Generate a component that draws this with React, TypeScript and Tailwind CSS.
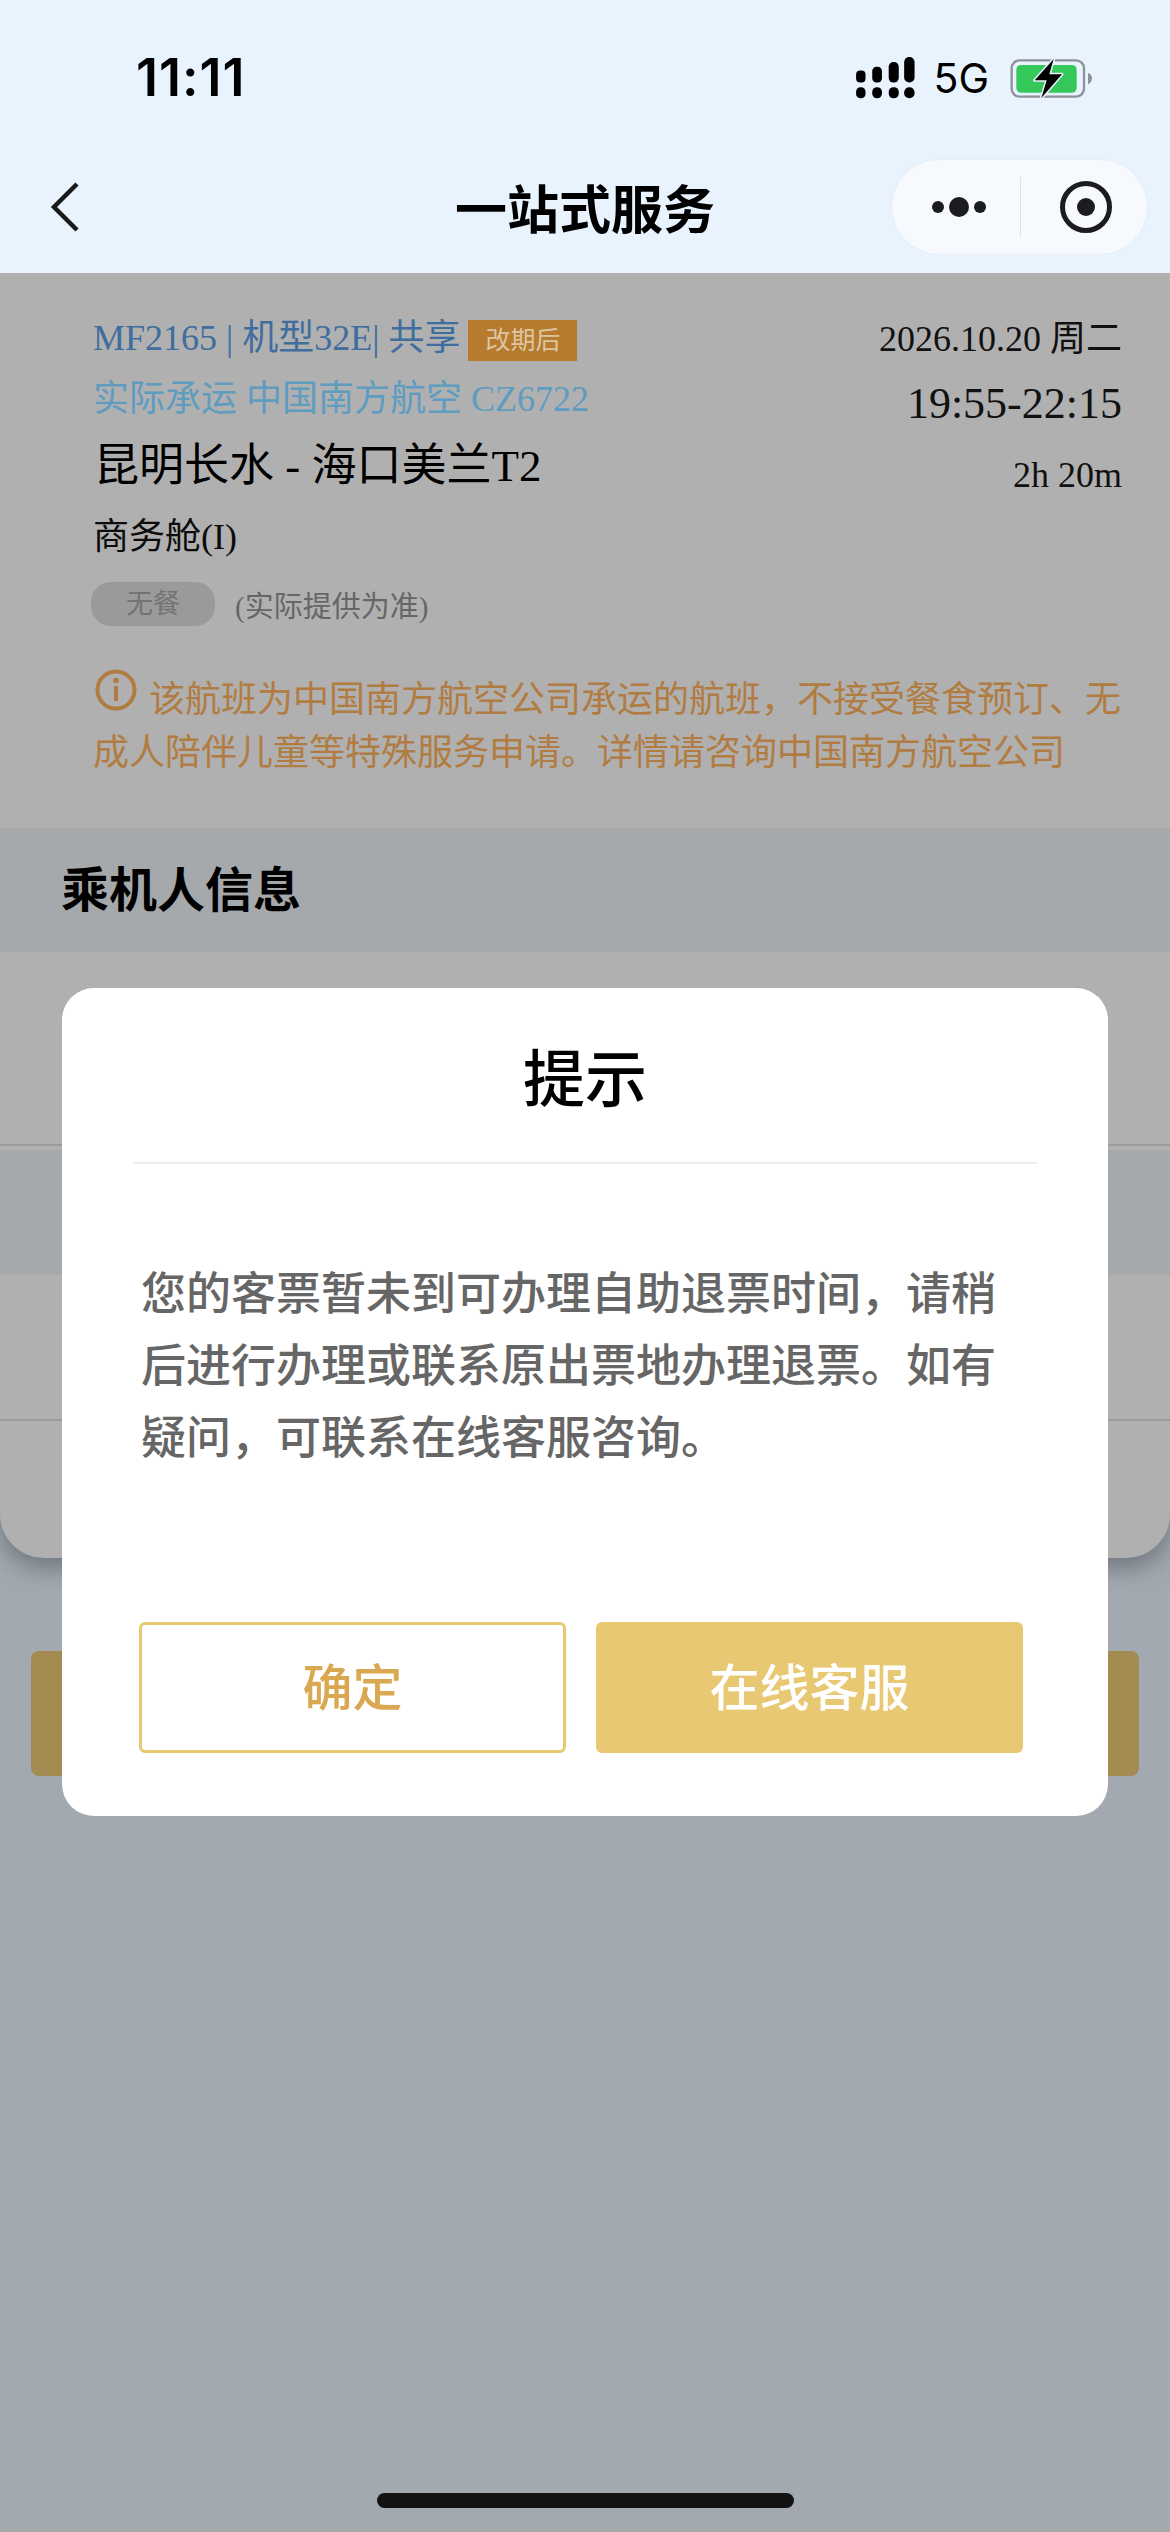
function Signal() {
  return (
    <svg className="w-[59px] h-[42px]" viewBox="108 50 175 125">
      <rect x="108" y="90" width="28" height="36" rx="12" fill="#000" />
      <rect x="156" y="79" width="29" height="47" rx="13" fill="#000" />
      <rect x="205" y="65" width="30" height="61" rx="14" fill="#000" />
      <rect x="251" y="50" width="31" height="76" rx="15" fill="#000" />
      <rect x="108" y="140" width="28" height="33" rx="13" fill="#000" />
      <rect x="156" y="140" width="29" height="33" rx="14" fill="#000" />
      <rect x="205" y="140" width="30" height="33" rx="14" fill="#000" />
      <rect x="251" y="140" width="31" height="33" rx="15" fill="#000" />
    </svg>
  )
}

function Battery() {
  return (
    <svg className="w-[83px] h-[42px]" viewBox="566 48 249 126">
      <rect x="571" y="58" width="217" height="109" rx="24" fill="none" stroke="#8e9297" strokeWidth="7" />
      <rect x="585" y="72" width="181" height="83" rx="14" fill="#34c759" />
      <path d="M800 95c8 3 12 10 12 17s-4 15-12 18z" fill="#8e9297" />
      <path
        d="M697 54 L640 118 L676 118 L660 171 L722 100 L684 100 Z"
        fill="#000"
        stroke="#e9f3fe"
        strokeWidth="9"
        strokeLinejoin="round"
        paintOrder="stroke"
      />
    </svg>
  )
}

function Capsule() {
  return (
    <div className="w-[257px] h-[96px] rounded-[48px] bg-[#f6faff] border border-[#e6edf5] flex items-center">
      <div className="w-[128px] flex items-center justify-center gap-[5px] pl-[6px]">
        <span className="w-[12px] h-[12px] rounded-full bg-[#1c1c1e]" />
        <span className="w-[20px] h-[20px] rounded-full bg-[#1c1c1e]" />
        <span className="w-[12px] h-[12px] rounded-full bg-[#1c1c1e]" />
      </div>
      <div className="w-px h-[60px] bg-[#dfe3e8]" />
      <div className="flex-1 flex items-center justify-center pl-[4px]">
        <span className="w-[52px] h-[52px] rounded-full border-[5px] border-[#1c1c1e] flex items-center justify-center">
          <span className="w-[18px] h-[18px] rounded-full bg-[#1c1c1e]" />
        </span>
      </div>
    </div>
  )
}

function Header() {
  return (
    <header className="relative z-10 h-[273px] bg-[#e9f3fe] shrink-0">
      <div className="h-[159px] flex items-start justify-between pl-[136px] pr-[77px] pt-[50px]">
        <span className="text-[52px] leading-[56px] font-semibold text-black tracking-[1px] font-['Inter',sans-serif]">11:11</span>
        <div className="flex items-center h-[56px]">
          <Signal />
          <span className="ml-[18px] text-[41px] leading-[56px] text-black font-['Inter',sans-serif]">5G</span>
          <span className="ml-[21px]"><Battery /></span>
        </div>
      </div>
      <div className="h-[96px] relative flex items-center justify-between pl-[50px] pr-[22px]">
        <svg className="w-[30px] h-[52px]" viewBox="0 0 30 52">
          <path d="M27 3 L4 26 L27 49" fill="none" stroke="#1a1a1a" strokeWidth="4.5" />
        </svg>
        <h1 className="absolute left-0 right-0 text-center text-[52px] leading-[96px] font-bold text-black">一站式服务</h1>
        <Capsule />
      </div>
    </header>
  )
}

function FlightInfo() {
  return (
    <section className="h-[555px] pt-[36px] px-[48px] font-['Liberation_Serif','Noto_Sans_CJK_SC',serif]">
      <div className="flex justify-between">
        <div>
          <div className="h-[60px] flex items-center pl-[45px] text-[36px] text-[#3f6d9e] whitespace-pre">
            <span className="mt-[-2px]">MF2165 | 机型32E| 共享</span>
            <span className="ml-[8px] mt-[3px] w-[109px] h-[41px] bg-[#b67b2d] text-[#dcc6a2] text-[25px] flex items-center justify-center">改期后</span>
          </div>
          <div className="h-[60px] flex items-center pl-[45px] text-[36px] text-[#5e9cc0] whitespace-pre">实际承运 中国南方航空 CZ6722</div>
          <div className="h-[70px] flex items-center pl-[46px] pt-[5px] text-[45px] text-black whitespace-pre">昆明长水 - 海口美兰T2</div>
          <div className="h-[76px] flex items-center pl-[45px] text-[36px] text-[#0c0c0c]">商务舱(I)</div>
          <div className="h-[44px] mt-[7px] flex items-center pl-[43px]">
            <span className="w-[124px] h-[44px] rounded-[20px] bg-[#9a9a9a] text-[#737373] text-[27px] flex items-center justify-center">无餐</span>
            <span className="ml-[20px] mt-[8px] text-[29px] text-[#666666]">(实际提供为准)</span>
          </div>
        </div>
        <div className="text-right text-[#111]">
          <div className="h-[60px] leading-[60px] text-[36px] whitespace-pre">2026.10.20 周二</div>
          <div className="h-[70px] leading-[66px] text-[44px] mt-[2px]">19:55-22:15</div>
          <div className="h-[60px] leading-[64px] text-[36px] mt-[2px]">2h 20m</div>
        </div>
      </div>
      <div className="mt-[43px] pl-[45px] text-[36px] leading-[53px] text-[#b17c42]">
        <span className="inline-block align-[1px] mr-[12px] ml-[2px]">
          <svg className="w-[42px] h-[42px] block" viewBox="0 0 42 42">
            <circle cx="21" cy="21" r="18.5" fill="none" stroke="#b17c42" strokeWidth="4" />
            <circle cx="21" cy="11.5" r="2.8" fill="#b17c42" />
            <rect x="19" y="17" width="4" height="15" fill="#b17c42" />
          </svg>
        </span>
        该航班为中国南方航空公司承运的航班，不接受餐食预订、无
        <br />
        成人陪伴儿童等特殊服务申请。详情请咨询中国南方航空公司
      </div>
    </section>
  )
}

function Passengers() {
  return (
    <>
      <div className="h-[124px] bg-[#a6a9ac] flex items-center pl-[61px] pb-[8px] text-[48px] font-bold text-black">乘机人信息</div>
      <div className="h-[194px] border-b-2 border-[#9c9c9c]" />
      <div className="h-[125px] mt-[4px] bg-[#a6a9ac]" />
      <div className="h-[146px] border-b-2 border-[#989da3]" />
    </>
  )
}

function Dialog() {
  return (
    <div className="absolute z-20 left-[62px] top-[988px] w-[1046px] h-[828px] bg-white rounded-[32px] flex flex-col">
      <div className="mx-[71px] h-[176px] border-b-2 border-[#eeeeee] text-center text-[62px] leading-[174px] font-medium text-black">提示</div>
      <p className="mt-[91px] ml-[79px] w-[880px] text-[45px] leading-[72px] font-medium text-[#666666]">
        您的客票暂未到可办理自助退票时间，请稍后进行办理或联系原出票地办理退票。如有疑问，可联系在线客服咨询。
      </p>
      <div className="mt-auto mb-[63px] ml-[77px] flex gap-[30px]">
        <button className="w-[427px] h-[131px] pb-[6px] rounded-[6px] border-[3px] border-[#e9c874] bg-white text-[50px] font-medium text-[#d9a850]">确定</button>
        <button className="w-[427px] h-[131px] pb-[6px] rounded-[6px] bg-[#e9c874] text-[50px] font-medium text-white">在线客服</button>
      </div>
    </div>
  )
}

export default function App() {
  return (
    <div className="relative w-[1170px] h-[2532px] overflow-hidden bg-[#a2a9b1] flex flex-col font-['Noto_Sans_CJK_SC','Liberation_Sans',sans-serif]">
      <Header />
      <main className="h-[1285px] shrink-0 bg-[#b0b0b0] rounded-b-[44px] shadow-[0_10px_24px_rgba(70,76,84,0.55)]">
        <FlightInfo />
        <Passengers />
      </main>
      <div className="mt-[93px] mx-[31px] h-[125px] rounded-[8px] bg-[#a38b52] shrink-0" />
      <div className="mt-auto h-[3px] bg-[#aaaaaa]" />
      <div className="absolute left-[377px] top-[2493px] w-[417px] h-[15px] rounded-full bg-[#121212]" />
      <Dialog />
    </div>
  )
}
